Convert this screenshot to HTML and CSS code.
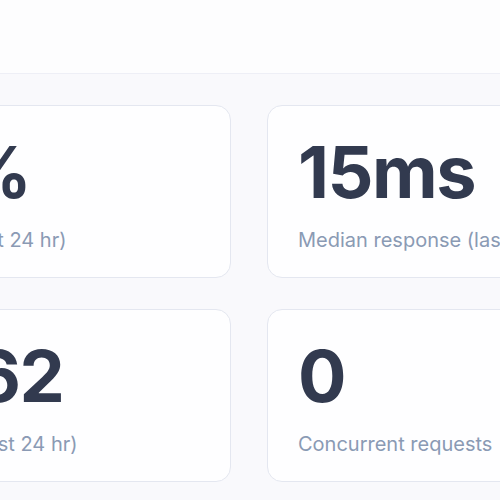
FILE: index.html
```html
<!DOCTYPE html>
<html>
<head>
  <meta charset="UTF-8">
  <title>Status</title>
  <link rel="stylesheet" href="styles.css">
</head>
<body>
  <header class="topbar"></header>

  <main class="stats">
    <div class="stat-card">
      <div class="stat-value">100%</div>
      <div class="stat-label">Success rate (last 24 hr)</div>
    </div>
    <div class="stat-card">
      <div class="stat-value">15ms</div>
      <div class="stat-label">Median response (last 24 hr)</div>
    </div>
    <div class="stat-card">
      <div class="stat-value">12,862</div>
      <div class="stat-label">Total requests (last 24 hr)</div>
    </div>
    <div class="stat-card">
      <div class="stat-value">0</div>
      <div class="stat-label">Concurrent requests</div>
    </div>
  </main>
</body>
</html>
```

FILE: styles.css
```css
body {
  margin: 0;
  font-family: Inter, "Noto Sans", sans-serif;
  background-color: #f9f9fc;
  overflow: hidden;
}
.topbar {
  height: 73px;
  background-color: #fdfdfe;
  border-bottom: 1px solid #eeeff6;
}
.stats {
  display: grid;
  grid-template-columns: 427px 427px;
  column-gap: 36px;
  row-gap: 31px;
  margin: 31px 0 0 -196px;
}
.stat-card {
  background-color: #fefeff;
  border: 1px solid #e4e7f0;
  border-radius: 15px;
  padding: 30px 30px 23px;
}
.stat-value {
  font-size: 72px;
  line-height: 72px;
  font-weight: 700;
  color: #323a4f;
  letter-spacing: -1.5px;
}
.stat-label {
  margin-top: 18px;
  font-size: 20px;
  line-height: 28px;
  color: #8a9ab4;
  white-space: nowrap;
}
```
